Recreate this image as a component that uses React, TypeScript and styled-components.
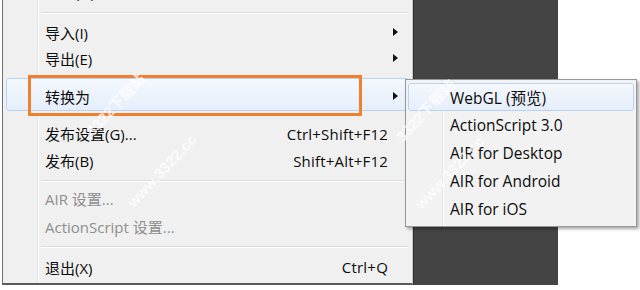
import styled, { createGlobalStyle } from "styled-components";

const GlobalStyle = createGlobalStyle`
  html, body {
    margin: 0;
    padding: 0;
    background: #fff;
  }
  body {
    font-family: "Open Sans", "Noto Sans CJK SC", sans-serif;
  }
`;

const Page = styled.div`
  position: relative;
  display: flex;
  align-items: flex-start;
  width: 640px;
  height: 290px;
  overflow: hidden;
  background: #fff;
`;

const MainMenu = styled.div`
  display: flex;
  flex-direction: column;
  box-sizing: border-box;
  width: 411px;
  height: 285px;
  margin-left: 2px;
  overflow: hidden;
  border-left: 1px solid #6f6f6f;
  border-right: 1px solid #c9c9c9;
  border-bottom: 2px solid #5a5a5a;
  background:
    linear-gradient(
      to right,
      transparent 34px,
      #e2e3e3 34px,
      #e2e3e3 35px,
      #ffffff 35px,
      #ffffff 36px,
      transparent 36px
    ),
    #f0f0f0;
`;

const DarkPanel = styled.div`
  width: 144px;
  height: 285px;
  background: #444444;
  border-left: 1px solid #2e2e2e;
`;

const Row = styled.div<{ $h: number; $pt?: number; $disabled?: boolean; $hover?: boolean }>`
  display: flex;
  align-items: center;
  flex-shrink: 0;
  box-sizing: border-box;
  height: ${(p) => p.$h}px;
  padding: ${(p) => p.$pt ?? 0}px 20px 0 38px;
  margin: 0 3px;
  font-size: 15px;
  color: ${(p) => (p.$disabled ? "#8e8e8e" : "#0c0c0c")};
  border: 1px solid ${(p) => (p.$hover ? "#b8d3f3" : "transparent")};
  border-radius: 3px;
  background: ${(p) =>
    p.$hover ? "linear-gradient(to bottom, #f4f8fd, #e5eefb)" : "transparent"};
`;

const Label = styled.span`
  flex: 1;
  white-space: nowrap;
`;

const Shortcut = styled.span`
  white-space: nowrap;
  letter-spacing: 0.2px;
`;

const Arrow = styled.span`
  width: 0;
  height: 0;
  margin-right: -10px;
  border-top: 4.5px solid transparent;
  border-bottom: 4.5px solid transparent;
  border-left: 5px solid #111;
`;

const Separator = styled.div<{ $top: number; $bottom: number }>`
  flex-shrink: 0;
  height: 1px;
  margin: ${(p) => p.$top}px 4px ${(p) => p.$bottom}px 38px;
  background: #dcdcdc;
  border-bottom: 1px solid #ffffff;
`;

const Spacer = styled.div<{ $h: number }>`
  flex-shrink: 0;
  height: ${(p) => p.$h}px;
`;

const SubMenu = styled.div`
  position: absolute;
  left: 405px;
  top: 79px;
  display: flex;
  flex-direction: column;
  box-sizing: border-box;
  width: 232px;
  height: 148px;
  padding: 3px 2px;
  border: 1px solid #979797;
  box-shadow: 2px 2px 3px rgba(0, 0, 0, 0.35);
  background:
    linear-gradient(
      to right,
      transparent 36px,
      #e2e3e3 36px,
      #e2e3e3 37px,
      #ffffff 37px,
      #ffffff 38px,
      transparent 38px
    ),
    #f2f2f2;
`;

const SubRow = styled(Row)`
  margin: 0;
  padding-left: 41px;
  font-size: 15.5px;
`;

const Highlight = styled.div`
  position: absolute;
  left: 28px;
  top: 75px;
  width: 334px;
  height: 41px;
  box-sizing: border-box;
  border: 3px solid #f27f2c;
`;

const Watermark = styled.div<{ $x: number; $y: number; $size: number }>`
  position: absolute;
  left: ${(p) => p.$x}px;
  top: ${(p) => p.$y}px;
  transform: rotate(-47deg);
  transform-origin: left center;
  font-family: "Liberation Sans", "Noto Sans CJK SC", sans-serif;
  font-size: ${(p) => p.$size}px;
  font-weight: bold;
  color: rgba(255, 255, 255, 0.75);
  white-space: nowrap;
  pointer-events: none;
`;

const items = {
  top: [
    { label: "导入(I)", arrow: true },
    { label: "导出(E)", arrow: true },
  ],
  publish: [
    { label: "发布设置(G)...", shortcut: "Ctrl+Shift+F12" },
    { label: "发布(B)", shortcut: "Shift+Alt+F12" },
  ],
  settings: ["AIR 设置...", "ActionScript 设置..."],
};

const convertTargets = [
  "WebGL (预览)",
  "ActionScript 3.0",
  "AIR for Desktop",
  "AIR for Android",
  "AIR for iOS",
];

export default function App() {
  return (
    <>
      <GlobalStyle />
      <Page>
        <MainMenu>
          <Row $h={27} style={{ marginTop: -22 }}>
            <Label>还原(H)</Label>
          </Row>
          <Separator $top={7} $bottom={5} />
          {items.top.map((item) => (
            <Row key={item.label} $h={26}>
              <Label>{item.label}</Label>
              {item.arrow && <Arrow />}
            </Row>
          ))}
          <Spacer $h={7} />
          <Row $h={33} $pt={3} $hover>
            <Label>转换为</Label>
            <Arrow />
          </Row>
          <Spacer $h={9} />
          {items.publish.map((item) => (
            <Row key={item.label} $h={27}>
              <Label>{item.label}</Label>
              <Shortcut>{item.shortcut}</Shortcut>
            </Row>
          ))}
          <Separator $top={6} $bottom={2} />
          {items.settings.map((label) => (
            <Row key={label} $h={28} $disabled>
              <Label>{label}</Label>
            </Row>
          ))}
          <Separator $top={6} $bottom={3} />
          <Row $h={30} $pt={2}>
            <Label>退出(X)</Label>
            <Shortcut>Ctrl+Q</Shortcut>
          </Row>
        </MainMenu>
        <DarkPanel />

        <SubMenu>
          {convertTargets.map((label, i) => (
            <SubRow key={label} $h={28} $hover={i === 0}>
              <Label>{label}</Label>
            </SubRow>
          ))}
        </SubMenu>

        <Highlight />

        <Watermark $x={88} $y={122} $size={15}>3322下载站</Watermark>
        <Watermark $x={130} $y={196} $size={15}>www.3322.cc</Watermark>
        <Watermark $x={398} $y={128} $size={15}>3322下载站</Watermark>
        <Watermark $x={418} $y={198} $size={15}>www.3322.cc</Watermark>
      </Page>
    </>
  );
}
